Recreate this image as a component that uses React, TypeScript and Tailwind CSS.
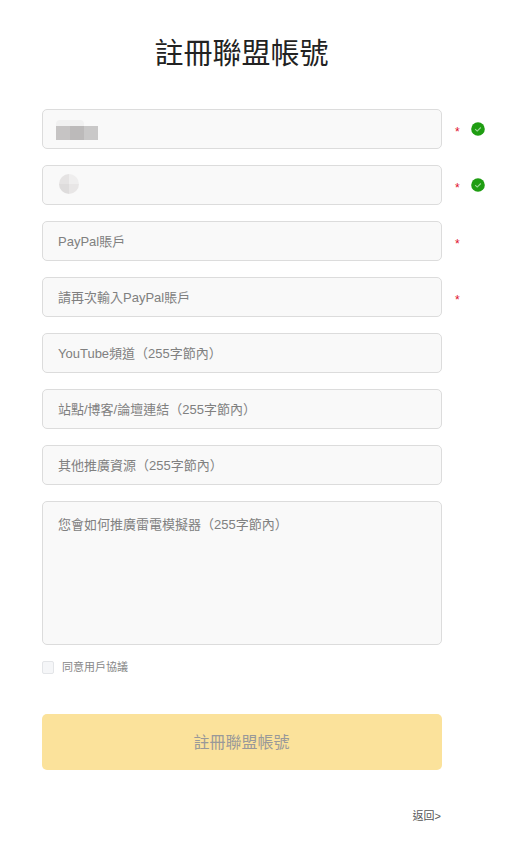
import React from 'react';

const font = { fontFamily: '"Liberation Sans", "Noto Sans CJK TC", sans-serif' };

const inputClass =
    'h-10 w-[400px] rounded-[5px] border border-[#dcdcdc] bg-[#f9f9f9] pl-[15px] text-[13px] text-[#808080] outline-none placeholder:text-[#808080]';

const CheckMark = () => (
    <svg width="14" height="14" viewBox="0 0 14 14" className="block">
        <circle cx="7" cy="7" r="6.8" fill="#1f9d12" />
        <path d="M4.2 7.2l2 1.9 3.6-3.6" fill="none" stroke="#9fd89a" strokeWidth="1.1" />
    </svg>
);

const Row: React.FC<{ placeholder?: string; required?: boolean; ok?: boolean; children?: React.ReactNode }> = ({
    placeholder,
    required,
    ok,
    children,
}) => (
    <div className="flex items-center">
        <div className="relative">
            <input type="text" placeholder={placeholder} className={inputClass} />
            {children}
        </div>
        {required && <span className="ml-[13px] mt-[6px] w-[6px] text-[12px] leading-none text-[#e0102a]">*</span>}
        {ok && (
            <span className="ml-[10px]">
                <CheckMark />
            </span>
        )}
    </div>
);

const App: React.FC = () => {
    return (
        <div className="min-h-[847px] bg-white pl-[42px]" style={font}>
            <h1 className="w-[399px] pt-[34px] text-center text-[29px] font-normal leading-[40px] text-[#222]">
                註冊聯盟帳號
            </h1>
            <form className="mt-[35px] flex flex-col gap-4">
                <Row required ok>
                    {/* blurred out values */}
                    <div className="absolute left-[14px] top-[11px] h-[6px] w-[28px] rounded-t-[4px] bg-[#f1f1f1]" />
                    <div className="absolute left-[14px] top-[17px] flex h-[14px]">
                        <div className="w-[14px] bg-[#c6c4c4]" />
                        <div className="w-[14px] bg-[#bcbaba]" />
                        <div className="w-[14px] bg-[#c9c8c8]" />
                    </div>
                </Row>
                <Row required ok>
                    <div className="absolute left-[17px] top-[9px] grid h-[20px] w-[20px] grid-cols-2 overflow-hidden rounded-full">
                        <div className="bg-[#e5e3e3]" />
                        <div className="bg-[#efeeee]" />
                        <div className="bg-[#dedcdc]" />
                        <div className="bg-[#e8e6e6]" />
                    </div>
                </Row>
                <Row placeholder="PayPal賬戶" required />
                <Row placeholder="請再次輸入PayPal賬戶" required />
                <Row placeholder="YouTube頻道（255字節內）" />
                <Row placeholder="站點/博客/論壇連結（255字節內）" />
                <Row placeholder="其他推廣資源（255字節內）" />
                <textarea
                    placeholder="您會如何推廣雷電模擬器（255字節內）"
                    className="h-[144px] w-[400px] resize-none rounded-[5px] border border-[#dcdcdc] bg-[#f9f9f9] px-[15px] py-[13px] text-[13px] leading-[20px] text-[#808080] outline-none placeholder:text-[#808080]"
                />
            </form>
            <label className="mt-[14px] flex items-center text-[11px] text-[#888]">
                <span className="h-[13px] w-[12px] rounded-[2px] border border-[#e3e5e8] bg-[#f5f6f8]" />
                <span className="ml-[8px]">同意用戶協議</span>
            </label>
            <button
                type="button"
                className="mt-[38px] h-[56px] w-[400px] rounded-[5px] bg-[#fbe29b] pr-[1px] pt-[3px] text-[16px] text-[#999]"
            >
                註冊聯盟帳號
            </button>
            <div className="mt-[39px] w-[399px] text-right text-[11px] leading-[14px] text-[#555]">返回&gt;</div>
        </div>
    );
};

export default App;
